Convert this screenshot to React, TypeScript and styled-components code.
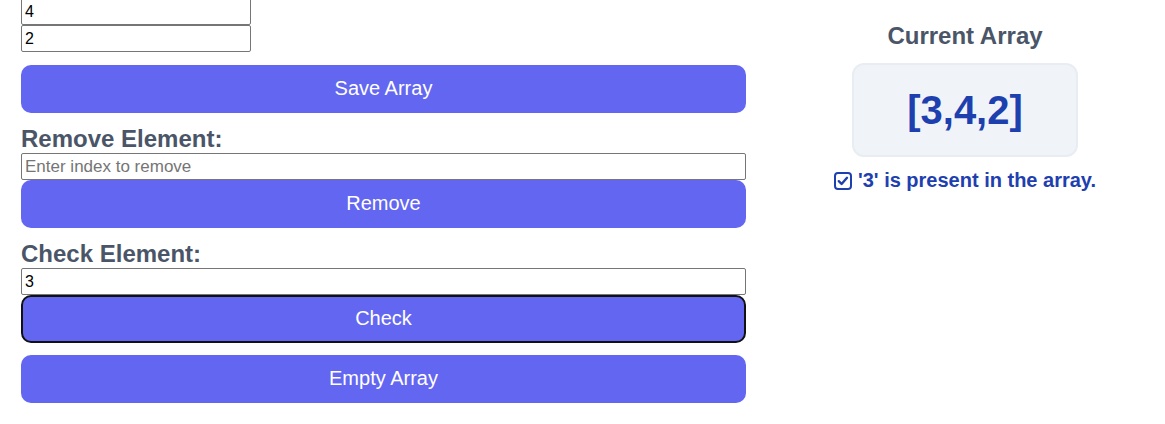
import React, { useState } from 'react'
import styled, { createGlobalStyle } from 'styled-components'

const GlobalStyle = createGlobalStyle`
  html, body {
    margin: 0;
    padding: 0;
    background: #ffffff;
    font-family: "Liberation Sans", Arial, sans-serif;
  }
`

const Page = styled.div`
  display: flex;
  align-items: flex-start;
  gap: 40px;
  padding: 0 21px;
`

const LeftColumn = styled.div`
  width: 725px;
  display: flex;
  flex-direction: column;
  margin-top: -2px;
`

const RightColumn = styled.div`
  flex: 1;
  display: flex;
  flex-direction: column;
  align-items: center;
  padding-top: 22px;
`

const SmallInput = styled.input`
  box-sizing: border-box;
  width: 230px;
  height: 27px;
  margin: 0;
  padding: 0 3px;
  border: 1px solid #767676;
  border-radius: 2px;
  font-family: "Liberation Sans", Arial, sans-serif;
  font-size: 16px;
  color: #000;
`

const WideInput = styled(SmallInput)`
  width: 100%;
  &::placeholder {
    color: #757575;
    font-size: 17px;
  }
`

const Button = styled.button<{ $focused?: boolean; $gap?: number }>`
  box-sizing: border-box;
  width: 100%;
  height: 48px;
  margin: ${({ $gap }) => $gap ?? 0}px 0 0;
  padding: 0 0 2px;
  border: ${({ $focused }) => ($focused ? '2px solid #111' : 'none')};
  border-radius: 10px;
  background: #6366f1;
  color: #ffffff;
  font-family: "Liberation Sans", Arial, sans-serif;
  font-size: 20px;
  cursor: pointer;
  outline: none;
`

const Label = styled.h3`
  margin: 15px 0 3px;
  font-size: 24px;
  font-weight: bold;
  line-height: 22px;
  color: #4a5568;
`

const Title = styled.h2`
  margin: 0;
  font-size: 24px;
  font-weight: bold;
  line-height: normal;
  color: #4a5568;
`

const ArrayBox = styled.div`
  margin-top: 13px;
  padding: 22px 53px;
  background: #f0f4f9;
  border: 2px solid #e8edf3;
  border-radius: 12px;
  font-size: 40px;
  font-weight: bold;
  line-height: 46px;
  color: #1e40af;
`

const Status = styled.p`
  margin: 12px 0 0;
  font-size: 20px;
  font-weight: bold;
  line-height: 23px;
  color: #1e40af;
  display: flex;
  align-items: center;
  gap: 6px;
`

const CheckIcon = () => (
  <svg width="18" height="18" viewBox="0 0 18 18" fill="none">
    <rect x="1" y="1" width="16" height="16" rx="3" stroke="#1e40af" strokeWidth="2" />
    <path d="M4.8 9.2 L7.6 12 L13 5.8" stroke="#1e40af" strokeWidth="2.4" strokeLinecap="round" strokeLinejoin="round" />
  </svg>
)

export default function App() {
  const [values, setValues] = useState(['4', '2'])
  const [removeIndex, setRemoveIndex] = useState('')
  const [checkValue, setCheckValue] = useState('3')
  const array = [3, 4, 2]

  return (
    <>
      <GlobalStyle />
      <Page>
        <LeftColumn>
          {values.map((v, i) => (
            <SmallInput
              key={i}
              value={v}
              onChange={(e) => setValues(values.map((x, j) => (j === i ? e.target.value : x)))}
            />
          ))}
          <Button $gap={13}>Save Array</Button>
          <Label>Remove Element:</Label>
          <WideInput
            placeholder="Enter index to remove"
            value={removeIndex}
            onChange={(e) => setRemoveIndex(e.target.value)}
          />
          <Button>Remove</Button>
          <Label>Check Element:</Label>
          <WideInput value={checkValue} onChange={(e) => setCheckValue(e.target.value)} />
          <Button $focused>Check</Button>
          <Button $gap={12}>Empty Array</Button>
        </LeftColumn>
        <RightColumn>
          <Title>Current Array</Title>
          <ArrayBox>[{array.join(',')}]</ArrayBox>
          <Status>
            <CheckIcon />
            '{checkValue}' is present in the array.
          </Status>
        </RightColumn>
      </Page>
    </>
  )
}
